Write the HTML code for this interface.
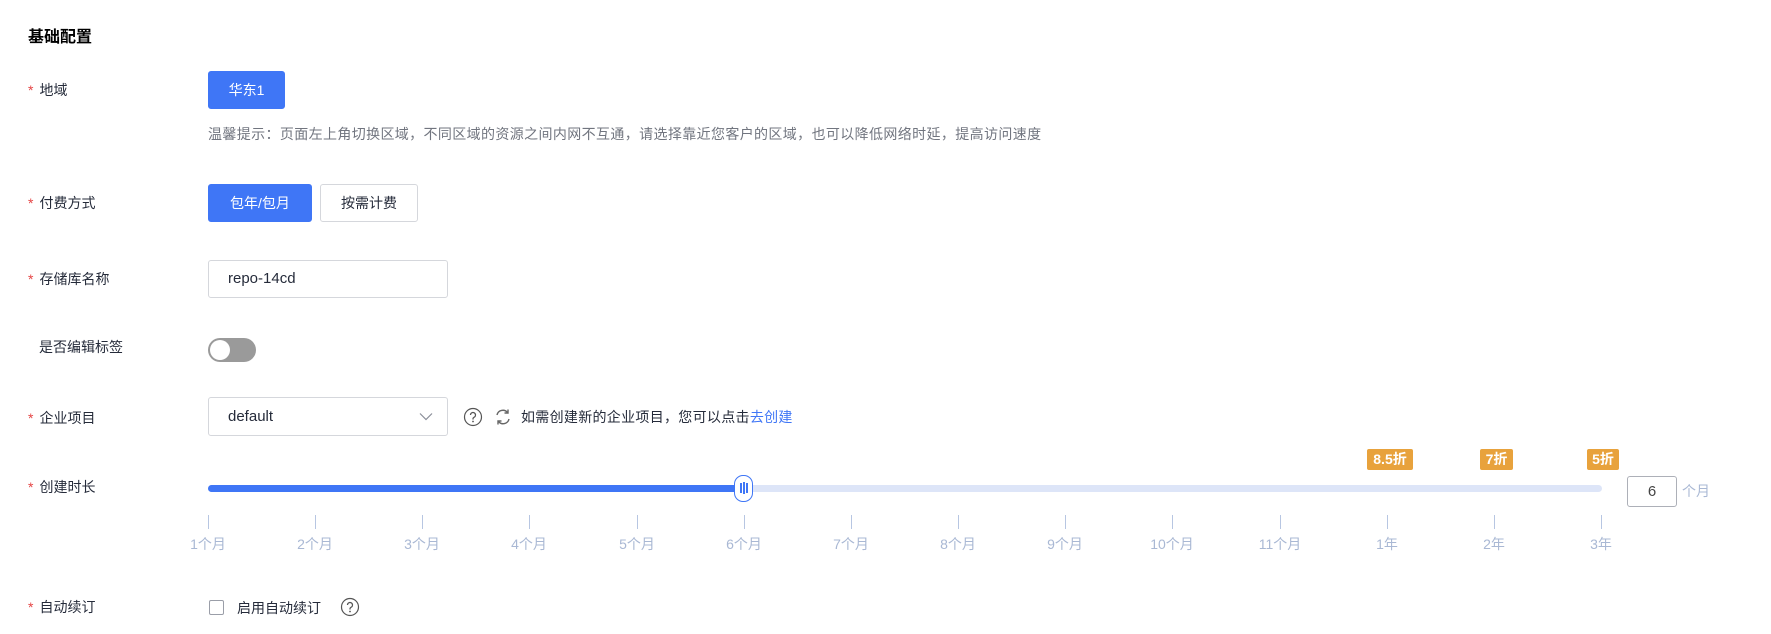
<!DOCTYPE html>
<html><head><meta charset="utf-8"><style>
*{margin:0;padding:0;box-sizing:border-box}
body{width:1771px;height:634px;background:#fff;font-family:"Liberation Sans","Noto Sans CJK SC",sans-serif;font-size:14px;color:#252b3a;position:relative;overflow:hidden}
.a{position:absolute;white-space:nowrap}
.lbl{position:absolute;left:28px;line-height:20px;font-size:14px;color:#252b3a}
.lbl i{font-style:normal;color:#e54545;margin-right:6px}
.btn{position:absolute;height:38px;line-height:36px;text-align:center;border-radius:3px;font-size:14px;border:1px solid #d5d7dc;color:#252b3a;background:#fff}
.btn.on{background:#3f76f6;border-color:#3f76f6;color:#fff}
.tick{position:absolute;top:515px;width:1px;height:14px;background:#b7c6e2}
.tl{position:absolute;top:534px;font-size:14px;color:#a9b8d4;transform:translateX(-50%);white-space:nowrap}
.badge{position:absolute;top:449px;height:21px;line-height:21px;background:#e8a23c;color:#fff;font-weight:bold;font-size:14px;text-align:center;border-radius:2px}
</style></head><body>
<div class="a" style="left:28px;top:23px;font-size:16px;font-weight:bold;color:#000">基础配置</div>

<div class="lbl" style="top:80px"><i>*</i>地域</div>
<div class="btn on" style="left:208px;top:71px;width:77px">华东1</div>
<div class="a" style="left:208px;top:124px;font-size:14px;color:#71757f;letter-spacing:0.37px">温馨提示：页面左上角切换区域，不同区域的资源之间内网不互通，请选择靠近您客户的区域，也可以降低网络时延，提高访问速度</div>

<div class="lbl" style="top:193px"><i>*</i>付费方式</div>
<div class="btn on" style="left:208px;top:184px;width:104px">包年/包月</div>
<div class="btn" style="left:320px;top:184px;width:98px">按需计费</div>

<div class="lbl" style="top:269px"><i>*</i>存储库名称</div>
<div class="a" style="left:208px;top:260px;width:240px;height:38px;border:1px solid #d5d7dc;border-radius:3px;padding-left:19px;line-height:36px;font-size:15px;color:#252b3a">repo-14cd</div>

<div class="lbl" style="top:337px;left:39px">是否编辑标签</div>
<div class="a" style="left:208px;top:338px;width:48px;height:24px;border-radius:12px;background:#9a9a9a"><div style="position:absolute;left:2px;top:2px;width:20px;height:20px;border-radius:50%;background:#fff"></div></div>

<div class="lbl" style="top:408px"><i>*</i>企业项目</div>
<div class="a" style="left:208px;top:397px;width:240px;height:39px;border:1px solid #d5d7dc;border-radius:3px;padding-left:19px;line-height:37px;font-size:15px">default
<svg style="position:absolute;right:14px;top:14px" width="14" height="9" viewBox="0 0 14 9"><path d="M1 1.5L7 7.5L13 1.5" fill="none" stroke="#8a8e99" stroke-width="1.2"/></svg></div>
<svg class="a" style="left:463px;top:407px" width="20" height="20" viewBox="0 0 20 20"><circle cx="10" cy="10" r="8.5" fill="none" stroke="#555" stroke-width="1.2"/><path d="M7.5 8a2.5 2.5 0 1 1 3.5 2.3c-.7.3-1 .8-1 1.5v.7" fill="none" stroke="#555" stroke-width="1.3"/><circle cx="10" cy="14.5" r=".9" fill="#555"/></svg>
<svg class="a" style="left:494px;top:408px" width="18" height="18" viewBox="0 0 18 18"><path d="M3 7a6 6 0 0 1 10.5-2.5M15 11a6 6 0 0 1-10.5 2.5" fill="none" stroke="#666" stroke-width="1.4"/><path d="M14 1.5v3.5h-3.5M4 16.5v-3.5h3.5" fill="none" stroke="#666" stroke-width="1.4"/></svg>
<div class="a" style="left:521px;top:407px;font-size:14px;color:#252b3a;letter-spacing:0.3px">如需创建新的企业项目，您可以点击<span style="color:#3f76f6">去创建</span></div>

<div class="lbl" style="top:477px"><i>*</i>创建时长</div>
<div class="a" style="left:208px;top:485px;width:1394px;height:7px;border-radius:4px;background:#dde5f8"></div>
<div class="a" style="left:208px;top:485px;width:535px;height:7px;border-radius:4px 0 0 4px;background:#3f76f6"></div>
<div class="a" style="left:734px;top:475px;width:19px;height:27px;border:1.5px solid #3f76f6;border-radius:9px;background:#fff">
<div style="position:absolute;left:5px;top:7px;width:1.5px;height:10px;background:#3f76f6"></div>
<div style="position:absolute;left:8px;top:6px;width:1.5px;height:12px;background:#3f76f6"></div>
<div style="position:absolute;left:11px;top:7px;width:1.5px;height:10px;background:#3f76f6"></div></div>
<div class="badge" style="left:1367px;width:46px">8.5折</div>
<div class="badge" style="left:1480px;width:33px">7折</div>
<div class="badge" style="left:1587px;width:32px">5折</div>
<div class="a" style="left:1627px;top:476px;width:50px;height:31px;border:1px solid #adb0b8;border-radius:3px;text-align:center;line-height:29px;font-size:15px;color:#444">6</div>
<div class="a" style="left:1682px;top:481px;font-size:14px;color:#a9b8d4">个月</div>

<div class="tick" style="left:208px"></div><div class="tl" style="left:208px">1个月</div>
<div class="tick" style="left:315px"></div><div class="tl" style="left:315px">2个月</div>
<div class="tick" style="left:422px"></div><div class="tl" style="left:422px">3个月</div>
<div class="tick" style="left:529px"></div><div class="tl" style="left:529px">4个月</div>
<div class="tick" style="left:637px"></div><div class="tl" style="left:637px">5个月</div>
<div class="tick" style="left:744px"></div><div class="tl" style="left:744px">6个月</div>
<div class="tick" style="left:851px"></div><div class="tl" style="left:851px">7个月</div>
<div class="tick" style="left:958px"></div><div class="tl" style="left:958px">8个月</div>
<div class="tick" style="left:1065px"></div><div class="tl" style="left:1065px">9个月</div>
<div class="tick" style="left:1172px"></div><div class="tl" style="left:1172px">10个月</div>
<div class="tick" style="left:1280px"></div><div class="tl" style="left:1280px">11个月</div>
<div class="tick" style="left:1387px"></div><div class="tl" style="left:1387px">1年</div>
<div class="tick" style="left:1494px"></div><div class="tl" style="left:1494px">2年</div>
<div class="tick" style="left:1601px"></div><div class="tl" style="left:1601px">3年</div>

<div class="lbl" style="top:597px"><i>*</i>自动续订</div>
<div class="a" style="left:209px;top:600px;width:15px;height:15px;border:1px solid #9a9ea8;border-radius:2px"></div>
<div class="a" style="left:237px;top:598px;font-size:14px">启用自动续订</div>
<svg class="a" style="left:340px;top:597px" width="20" height="20" viewBox="0 0 20 20"><circle cx="10" cy="10" r="8.5" fill="none" stroke="#555" stroke-width="1.2"/><path d="M7.5 8a2.5 2.5 0 1 1 3.5 2.3c-.7.3-1 .8-1 1.5v.7" fill="none" stroke="#555" stroke-width="1.3"/><circle cx="10" cy="14.5" r=".9" fill="#555"/></svg>
</body></html>
